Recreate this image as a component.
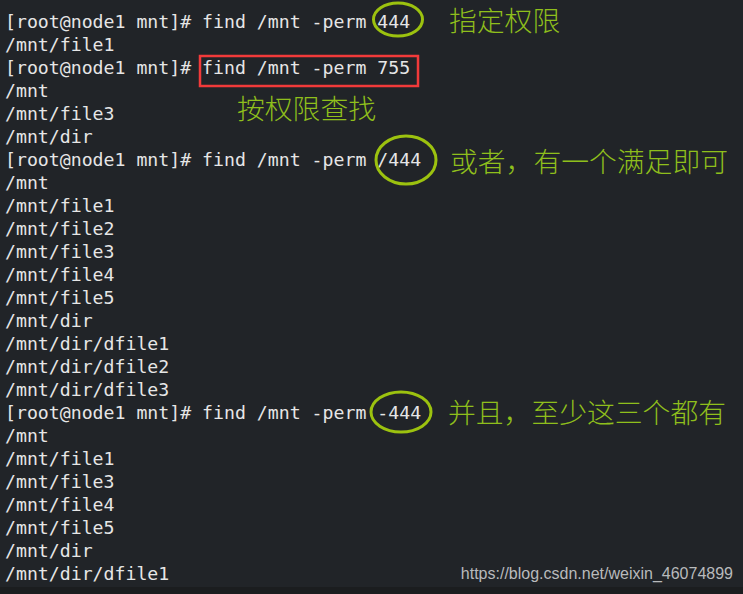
const lines = [
  "[root@node1 mnt]# find /mnt -perm 444",
  "/mnt/file1",
  "[root@node1 mnt]# find /mnt -perm 755",
  "/mnt",
  "/mnt/file3",
  "/mnt/dir",
  "[root@node1 mnt]# find /mnt -perm /444",
  "/mnt",
  "/mnt/file1",
  "/mnt/file2",
  "/mnt/file3",
  "/mnt/file4",
  "/mnt/file5",
  "/mnt/dir",
  "/mnt/dir/dfile1",
  "/mnt/dir/dfile2",
  "/mnt/dir/dfile3",
  "[root@node1 mnt]# find /mnt -perm -444",
  "/mnt",
  "/mnt/file1",
  "/mnt/file3",
  "/mnt/file4",
  "/mnt/file5",
  "/mnt/dir",
  "/mnt/dir/dfile1",
];

// 注释文字（绿色）
const notes = [
  { text: "指定权限", cls: "left-[449px] top-[3px]" },
  { text: "按权限查找", cls: "left-[237px] top-[91px]" },
  { text: "或者，有一个满足即可", cls: "left-[450px] top-[144px]" },
  { text: "并且，至少这三个都有", cls: "left-[448px] top-[395px]" },
];

export default function App() {
  return (
    <div className="relative w-[743px] h-[594px] overflow-hidden bg-[#212428]">
      {/* terminal output */}
      <div className="pl-[5px] pt-[10px] text-[18.2px] leading-[23px] text-[#e6e6e6] font-['DejaVu_Sans_Mono',monospace] whitespace-pre">
        {lines.map((l, i) => (
          <div key={i}>{l}</div>
        ))}
      </div>

      {notes.map((n) => (
        <div
          key={n.text}
          className={`absolute ${n.cls} text-[27.8px] leading-[32px] text-[#8fbf1c] font-['Noto_Sans_CJK_SC',sans-serif] font-light whitespace-nowrap`}
        >
          {n.text}
        </div>
      ))}

      {/* marks */}
      <svg className="absolute left-0 top-0" width="743" height="594" fill="none">
        <ellipse cx="398" cy="19.5" rx="24.5" ry="16.5" stroke="#9cc20f" strokeWidth="3" />
        <rect x="200" y="56" width="218" height="30" stroke="#f23a3a" strokeWidth="2.5" />
        <ellipse cx="406" cy="160" rx="30" ry="24" stroke="#9cc20f" strokeWidth="3" />
        <ellipse cx="401" cy="412" rx="30" ry="20" stroke="#9cc20f" strokeWidth="3" />
      </svg>

      <div className="absolute right-[10px] top-[564px] text-[16px] leading-[20px] text-[#b8babc] font-['Liberation_Sans',sans-serif]">
        https://blog.csdn.net/weixin_46074899
      </div>
      <div className="absolute left-0 bottom-0 w-full h-[7px] bg-[#1b1d1f]" />
    </div>
  );
}
